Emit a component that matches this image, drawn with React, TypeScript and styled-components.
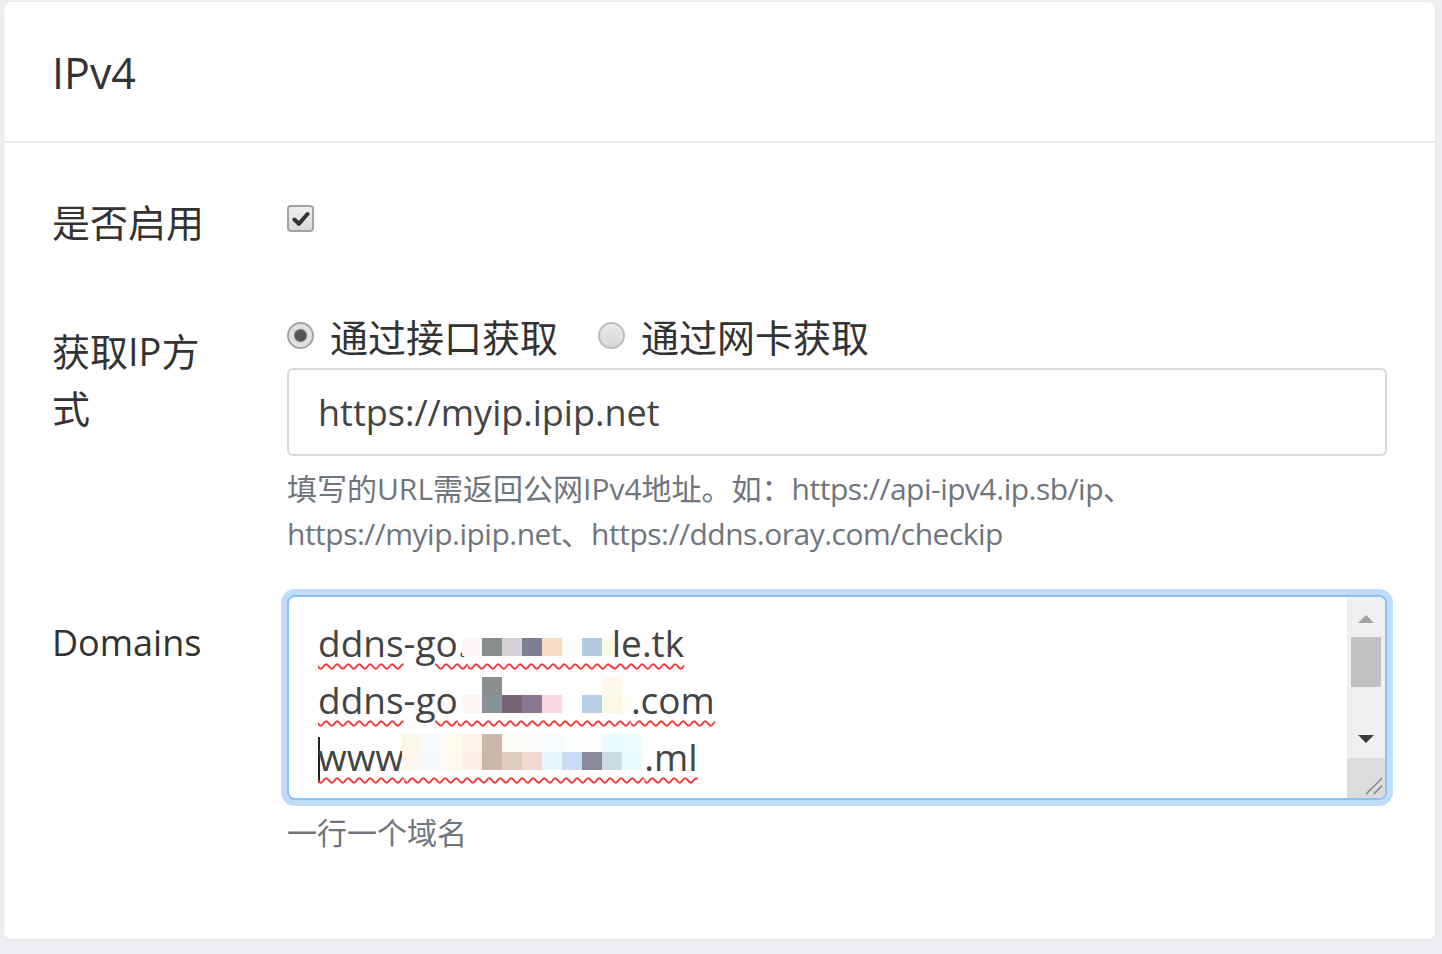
import { FC } from "react";
import styled, { createGlobalStyle } from "styled-components";

const GlobalStyle = createGlobalStyle`
  html, body {
    margin: 0;
    padding: 0;
    background: #ededf2;
  }
  body {
    font-family: "Open Sans", "Noto Sans CJK SC", sans-serif;
    color: #333;
  }
`;

type Cell = [string, string];

// mosaic cells over the hidden parts of the domains: [top, bottom]
const line1: Cell[] = [
  ["transparent", "#fdf7fa"], ["transparent", "#8a8d8d"], ["transparent", "#d6cfd3"],
  ["transparent", "#7f7f94"], ["transparent", "#f5dcc2"], ["transparent", "#fffdfb"],
  ["transparent", "#b5cbe2"], ["transparent", "#fdfae6"],
];
const line2: Cell[] = [
  ["transparent", "#fdf5f3"], ["#8b8e8e", "#86939a"], ["transparent", "#7a6573"],
  ["transparent", "#8a7890"], ["transparent", "#fbd7e3"], ["transparent", "#ffffff"],
  ["transparent", "#b8cde6"], ["#fdf8ea", "#fdf7e6"], ["transparent", "#fefbf0"],
];
const line3: Cell[] = [
  ["#fdf7ea", "#fdf6ec"], ["#f6fbff", "#f4f8ff"], ["#fffbef", "#fffaef"],
  ["#fdf2ec", "#fdeee8"], ["#cbb8a8", "#cbb8a8"], ["#fbfcf6", "#dccdbd"],
  ["#fdfafa", "#f2d8d0"], ["#f4fcfe", "#e6f8fc"], ["#fbfdff", "#c8dcf6"],
  ["#fdfdfd", "#8a8a9c"], ["#e8fbfd", "#c8dce2"], ["#eafcfd", "#e7fbfd"],
];

const Mosaic: FC<{ cells: Cell[]; spaces: number; shift: number }> = ({ cells, spaces, shift }) => (
  <Hidden>
    {"\u00a0".repeat(spaces)}
    <Pixels $shift={shift}>
      {cells.map((c, i) => (
        <PixelCol key={i}>
          <Pixel $bg={c[0]} />
          <Pixel $bg={c[1]} />
        </PixelCol>
      ))}
    </Pixels>
  </Hidden>
);

const App: FC = () => {
  return (
    <Page>
      <GlobalStyle />
      <Card>
        <CardHeader>
          <Title>IPv4</Title>
        </CardHeader>
        <CardBody>
          <FormRow $mb={47}>
            <Label $pt={11}>是否启用</Label>
            <Control $pt={11}>
              <CheckLine>
                <Checkbox>
                  <svg width="18" height="16" viewBox="0 0 18 16">
                    <path d="M2.5 8.5 L6.8 12.8 L15.5 3" fill="none" stroke="#333" strokeWidth="4" strokeLinecap="round" strokeLinejoin="round" />
                  </svg>
                </Checkbox>
              </CheckLine>
            </Control>
          </FormRow>

          <FormRow $mb={39}>
            <Label $pt={14}>获取IP方式</Label>
            <Control>
              <RadioGroup>
                <RadioItem>
                  <Radio $checked />
                  通过接口获取
                </RadioItem>
                <RadioItem>
                  <Radio />
                  通过网卡获取
                </RadioItem>
              </RadioGroup>
              <TextInput>https://myip.ipip.net</TextInput>
              <Help>
                填写的URL需返回公网IPv4地址。如：<Url>https://api-ipv4.ip.sb/ip</Url>、
                <Url>https://myip.ipip.net</Url>、<Url>https://ddns.oray.com/checkip</Url>
              </Help>
            </Control>
          </FormRow>

          <FormRow $mb={0}>
            <Label $pt={19} $size={36}>Domains</Label>
            <Control>
              <TextArea>
                <TextContent>
                  <Line>
                    <Spell>ddns</Spell>-<Spell>go.<Mosaic cells={line1} spaces={15} shift={-6} />le.tk</Spell>
                  </Line>
                  <Line>
                    <Spell>ddns</Spell>-<Spell>go<Mosaic cells={line2} spaces={18} shift={4} />.com</Spell>
                  </Line>
                  <Line>
                    <Caret />
                    <Spell>www<Mosaic cells={line3} spaces={25} shift={-2} />.ml</Spell>
                  </Line>
                </TextContent>
                <Scrollbar>
                  <ScrollButton>
                    <Arrow $up />
                  </ScrollButton>
                  <Track>
                    <Thumb />
                  </Track>
                  <ScrollButton>
                    <Arrow />
                  </ScrollButton>
                  <Resizer>
                    <svg width="40" height="40" viewBox="0 0 40 40">
                      <path d="M20 37 L37 20 M28 37 L37 28" stroke="#8a8a8a" strokeWidth="1.6" />
                    </svg>
                  </Resizer>
                </Scrollbar>
              </TextArea>
              <Help>一行一个域名</Help>
            </Control>
          </FormRow>
        </CardBody>
      </Card>
    </Page>
  );
};

const Page = styled.div`
  padding: 2px 7px 13px 4px;
`;

const Card = styled.div`
  background: #fff;
  border-radius: 7px;
  box-shadow: 0 0 0 1px rgba(0, 0, 0, 0.02);
`;

const CardHeader = styled.div`
  height: 141px;
  box-sizing: border-box;
  padding: 3px 48px 0;
  display: flex;
  align-items: center;
  border-bottom: 2px solid #ececf1;
`;

const Title = styled.h5`
  margin: 0;
  font-size: 43px;
  font-weight: 400;
  color: #333;
  line-height: 1.2;
`;

const CardBody = styled.div`
  padding: 40px 48px 84px 48px;
`;

const FormRow = styled.div<{ $mb: number }>`
  display: grid;
  grid-template-columns: 235px 1fr;
  margin-bottom: ${(p) => p.$mb}px;
`;

const Label = styled.div<{ $pt: number; $size?: number }>`
  font-size: ${(p) => p.$size ?? 38}px;
  line-height: 57px;
  padding-top: ${(p) => p.$pt}px;
  padding-bottom: 11px;
  max-width: 172px;
  color: #333;
`;

const Control = styled.div<{ $pt?: number }>`
  padding-top: ${(p) => p.$pt ?? 0}px;
  min-width: 0;
`;

const CheckLine = styled.div`
  height: 57px;
  display: flex;
  align-items: center;
  padding-bottom: 8px;
  box-sizing: border-box;
`;

const Checkbox = styled.span`
  width: 27px;
  height: 27px;
  box-sizing: border-box;
  border: 2px solid #a2a2a2;
  border-radius: 4px;
  background: linear-gradient(#f0f0f0, #d9d9d9);
  display: flex;
  align-items: center;
  justify-content: center;
`;

const RadioGroup = styled.div`
  display: flex;
  gap: 40px;
  height: 57px;
  align-items: center;
`;

const RadioItem = styled.label`
  display: flex;
  align-items: center;
  gap: 16px;
  font-size: 38px;
  line-height: 57px;
  color: #333;
`;

const Radio = styled.span<{ $checked?: boolean }>`
  width: 27px;
  height: 27px;
  box-sizing: border-box;
  border-radius: 50%;
  border: 2px solid ${(p) => (p.$checked ? "#a4a4a4" : "#bdbdbd")};
  background: ${(p) =>
    p.$checked
      ? "radial-gradient(circle, #555 0 5px, #7a7a7a 6px, #dcdcdc 7px, #e8e8e8 100%)"
      : "linear-gradient(#e8e8e8, #d8d8d8)"};
  margin-bottom: 4px;
`;

const TextInput = styled.div`
  margin-top: 2px;
  height: 88px;
  box-sizing: border-box;
  border: 2px solid #d6d9de;
  border-radius: 6px;
  padding: 0 29px;
  display: flex;
  align-items: center;
  font-size: 36px;
  color: #444;
`;

const Help = styled.div`
  margin-top: 10px;
  font-size: 30px;
  line-height: 45px;
  color: #6f757c;
`;

const Url = styled.span`
  letter-spacing: -0.5px;
`;

const TextArea = styled.div`
  height: 205px;
  box-sizing: border-box;
  border: 2px solid #8cc0f6;
  border-radius: 8px;
  box-shadow: 0 0 0 6px #bfdcfb;
  display: flex;
  overflow: hidden;
  background: #fff;
`;

const TextContent = styled.div`
  flex: 1;
  padding: 17px 29px;
  font-size: 37px;
  line-height: 57px;
  color: #444;
`;

const Line = styled.div`
  white-space: nowrap;
`;

const Spell = styled.span`
  text-decoration: underline wavy #f03a3a;
  text-decoration-thickness: 1.5px;
  text-underline-offset: 6px;
`;

const Hidden = styled.span`
  position: relative;
`;

const Pixels = styled.span<{ $shift: number }>`
  position: absolute;
  left: ${(p) => p.$shift}px;
  right: 0;
  bottom: 12px;
  display: flex;
  overflow: hidden;
`;

const PixelCol = styled.span`
  display: flex;
  flex-direction: column;
  flex: none;
`;

const Pixel = styled.span<{ $bg: string }>`
  width: 20px;
  height: 18px;
  background: ${(p) => p.$bg};
`;

const Caret = styled.span`
  display: inline-block;
  width: 2px;
  height: 46px;
  background: #222;
  vertical-align: -12px;
  margin-right: -2px;
`;

const Scrollbar = styled.div`
  width: 38px;
  display: flex;
  flex-direction: column;
  background: #f0f0f0;
`;

const ScrollButton = styled.div`
  height: 40px;
  display: flex;
  align-items: center;
  justify-content: center;
`;

const Arrow = styled.span<{ $up?: boolean }>`
  width: 0;
  height: 0;
  border-left: 8px solid transparent;
  border-right: 8px solid transparent;
  ${(p) =>
    p.$up
      ? "border-bottom: 8px solid #a3a3a3; margin-top: 4px;"
      : "border-top: 8px solid #3c3c3c; margin-top: 2px;"}
`;

const Track = styled.div`
  flex: 1;
  padding: 0 4px;
`;

const Thumb = styled.div`
  height: 50px;
  background: #c1c1c1;
`;

const Resizer = styled.div`
  height: 40px;
  background: #dcdcdc;
  display: flex;
`;

export default App;
